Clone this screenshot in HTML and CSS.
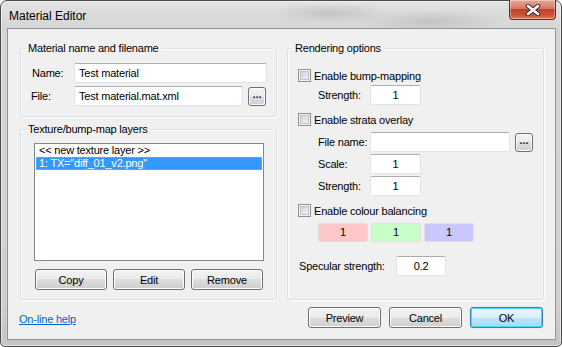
FILE: index.html
```html
<!DOCTYPE html>
<html lang="en">
<head>
  <meta charset="UTF-8" />
  <title>Material Editor</title>
  <link rel="stylesheet" href="styles.css">
</head>
<body>

  <div class="window">
    <div class="titlebar">
      <span class="title">Material Editor</span>
      <span class="close">
        <svg width="18" height="12" viewBox="0 0 18 12">
          <path d="M4 2 L14 10 M14 2 L4 10" stroke="#3a2a28" stroke-width="4.5" stroke-linecap="round" fill="none"/>
          <path d="M4 2 L14 10 M14 2 L4 10" stroke="#fff" stroke-width="2.6" stroke-linecap="round" fill="none"/>
        </svg>
      </span>
    </div>

    <div class="client">
      <div class="columns">
        <div class="col">
          <fieldset class="group">
            <legend>Material name and filename</legend>
            <div class="group-body name-body">
              <div class="row">
                <label class="lbl name-lbl">Name:</label>
                <input class="field grow" type="text" value="Test material" readonly />
              </div>
              <div class="row">
                <label class="lbl">File:</label>
                <input class="field grow" type="text" value="Test material.mat.xml" readonly />
                <button class="browse">...</button>
              </div>
            </div>
          </fieldset>

          <fieldset class="group">
            <legend>Texture/bump-map layers</legend>
            <div class="group-body layer-body">
              <div class="listbox">
                <div class="item">&lt;&lt; new texture layer &gt;&gt;</div>
                <div class="item selected">1: TX="diff_01_v2.png"</div>
              </div>
              <div class="list-buttons">
                <button class="btn">Copy</button>
                <button class="btn">Edit</button>
                <button class="btn">Remove</button>
              </div>
            </div>
          </fieldset>
        </div>

        <fieldset class="group">
          <legend>Rendering options</legend>
          <div class="group-body render-body">

            <div class="check-row first">
              <span class="check"></span>
              <span>Enable bump-mapping</span>
            </div>
            <div class="row sub tight">
              <label class="lbl sub-lbl">Strength:</label>
              <input class="field num" type="text" value="1" readonly />
            </div>

            <div class="check-row">
              <span class="check"></span>
              <span>Enable strata overlay</span>
            </div>
            <div class="row sub after-check">
              <label class="lbl sub-lbl">File name:</label>
              <input class="field strata" type="text" value="" readonly />
              <button class="browse">...</button>
            </div>
            <div class="row sub close-row">
              <label class="lbl sub-lbl">Scale:</label>
              <input class="field num" type="text" value="1" readonly />
            </div>
            <div class="row sub close-row">
              <label class="lbl sub-lbl">Strength:</label>
              <input class="field num" type="text" value="1" readonly />
            </div>

            <div class="check-row">
              <span class="check"></span>
              <span>Enable colour balancing</span>
            </div>
            <div class="swatches">
              <span class="swatch red">1</span>
              <span class="swatch green">1</span>
              <span class="swatch blue">1</span>
            </div>

            <div class="row specular">
              <label class="lbl spec-lbl">Specular strength:</label>
              <input class="field num" type="text" value="0.2" readonly />
            </div>
          </div>
        </fieldset>
      </div>

      <div class="footer">
        <a class="help" href="#">On-line help</a>
        <div class="dialog-buttons">
          <button class="btn">Preview</button>
          <button class="btn">Cancel</button>
          <button class="btn default">OK</button>
        </div>
      </div>
    </div>
  </div>

</body>
</html>
```

FILE: styles.css
```css
* {
  box-sizing: border-box;
}

body {
  margin: 0;
  font-family: "Liberation Sans", Arial, sans-serif;
  font-size: 11px;
  letter-spacing: -0.2px;
  color: #000;
  background: #fff;
}

/* window frame */
.window {
  width: 562px;
  height: 347px;
  border: 1px solid #4a4a4a;
  border-radius: 7px 7px 5px 5px;
  padding: 0 5px 6px 6px;
  display: flex;
  flex-direction: column;
  background:
    radial-gradient(ellipse 60px 10px at 330px 12px, rgba(150, 150, 150, 0.35), transparent),
    radial-gradient(ellipse 70px 12px at 430px 20px, rgba(160, 160, 160, 0.35), transparent),
    linear-gradient(to bottom, #e2e2e2, #d4d4d4 30px, #d0d0d0 300px, #c4c4c4);
  box-shadow: inset 0 0 0 1px rgba(255, 255, 255, 0.5);
}

.titlebar {
  height: 27px;
  display: flex;
  align-items: flex-start;
  justify-content: space-between;
}

.title {
  font-size: 12px;
  letter-spacing: 0;
  margin: 8px 0 0 2px;
  color: #000;
}

.close {
  width: 47px;
  height: 20px;
  margin-top: -1px;
  border: 1px solid #6a2a20;
  border-top: none;
  border-radius: 0 0 4px 4px;
  display: flex;
  align-items: center;
  justify-content: center;
  background: linear-gradient(to bottom, #e9a99a, #d47865 45%, #c13f26 50%, #d2583d 85%, #e08a66);
  box-shadow: inset 0 0 0 1px rgba(255, 255, 255, 0.35);
}

.client {
  flex: 1;
  border: 1px solid #8d949b;
  background: #f0f0f0;
  padding: 12px 11px 0 12px;
  display: flex;
  flex-direction: column;
}

.columns {
  display: grid;
  grid-template-columns: 257px 257px;
  gap: 10px;
}

.col {
  display: flex;
  flex-direction: column;
  gap: 5px;
}

/* group boxes */
.group {
  margin: 0;
  padding: 0;
  border: 1px solid #d5dfe5;
  border-radius: 3px;
  box-shadow: inset 1px 1px 0 #fff, 1px 1px 0 #fff;
}

.group legend {
  margin-left: 4px;
  padding: 0 3px;
  line-height: 14px;
}

.group-body {
  padding: 0 9px 0 10px;
}

.name-body {
  padding-top: 8px;
  padding-bottom: 10px;
}

.layer-body {
  padding: 7px 12px 9px 13px;
}

.render-body {
  padding-bottom: 22px;
}

.row {
  display: flex;
  align-items: center;
  height: 20px;
}

.row + .row {
  margin-top: 3px;
}

.lbl {
  width: 43px;
  flex: none;
}

.name-lbl {
  padding-left: 1px;
}

.field {
  height: 20px;
  border: 1px solid #e2e3ea;
  border-top-color: #abadb3;
  border-radius: 2px;
  background: #fff;
  font: inherit;
  letter-spacing: inherit;
  padding: 0 4px;
  outline: none;
  min-width: 0;
}

.grow {
  flex: 1;
}

.browse {
  flex: none;
  width: 18px;
  height: 19px;
  margin-left: 5px;
  margin-right: 1px;
  padding: 0 0 4px;
  border: 1px solid #707070;
  border-radius: 3px;
  background: linear-gradient(to bottom, #f2f2f2, #ebebeb 50%, #dddddd 50%, #cfcfcf);
  box-shadow: inset 0 0 0 1px #fcfcfc;
  font: inherit;
  font-weight: bold;
  line-height: 10px;
  color: #1a1a6a;
}

/* list box */
.listbox {
  height: 118px;
  border: 1px solid #828790;
  background: #fff;
  padding: 0 1px;
}

.item {
  height: 13px;
  line-height: 13px;
  padding: 0 3px;
  white-space: nowrap;
}

.selected {
  background: #3399ff;
  color: #fff;
  border: 1px dotted #f59a3c;
  line-height: 11px;
  padding: 0 2px;
}

.list-buttons {
  display: grid;
  grid-template-columns: repeat(3, 72px);
  gap: 6px;
  margin: 8px 1px 0;
}

.btn {
  height: 21px;
  border: 1px solid #707070;
  border-radius: 3px;
  background: linear-gradient(to bottom, #f2f2f2, #ebebeb 50%, #dddddd 50%, #cfcfcf);
  box-shadow: inset 0 0 0 1px #fcfcfc;
  font: inherit;
  letter-spacing: inherit;
  color: #000;
  padding: 0;
}

.btn.default {
  border-color: #3c7fb1;
  background: linear-gradient(to bottom, #eaf6fd, #d9f0fc 50%, #bee6fd 50%, #a7d9f5);
  box-shadow: inset 0 0 0 1px #48d8fb, 0 0 1px #7ac;
}

/* rendering options */
.check-row {
  display: flex;
  align-items: center;
  gap: 3px;
  height: 13px;
  margin-top: 8px;
}

.check-row.first {
  margin-top: 14px;
}

.check {
  width: 13px;
  height: 13px;
  flex: none;
  border: 1px solid #8e8f8f;
  background: linear-gradient(135deg, #cbcfd5, #f6f6f6);
  box-shadow: inset 0 0 0 1px #f4f4f4, inset 0 0 0 2px #bfc3c8;
}

.sub {
  padding-left: 20px;
}

.sub-lbl {
  width: 52px;
}

.row.tight {
  margin-top: 3px;
}

.row.after-check {
  margin-top: 6px;
}

.row.close-row {
  margin-top: 2px;
}

.num {
  width: 51px;
  text-align: center;
}

.strata {
  width: 140px;
}

.swatches {
  display: flex;
  gap: 3px;
  margin: 6px 0 0 20px;
}

.swatch {
  width: 50px;
  height: 19px;
  line-height: 17px;
  text-align: center;
  border: 1px solid #e0e0e0;
  border-radius: 2px;
}

.red {
  background: #ffc8c8;
}

.green {
  background: #c8ffc8;
}

.blue {
  background: #c8c8ff;
}

.row.specular {
  margin-top: 14px;
  padding-left: 1px;
}

.spec-lbl {
  width: 97px;
}

.specular .num {
  width: 50px;
}

/* footer */
.footer {
  display: flex;
  justify-content: space-between;
  align-items: center;
  margin-top: 7px;
  padding-right: 1px;
}

.help {
  color: #0066cc;
  margin-left: -1px;
  margin-top: 3px;
}

.dialog-buttons {
  display: grid;
  grid-template-columns: repeat(3, 73px);
  gap: 8px;
}
```
